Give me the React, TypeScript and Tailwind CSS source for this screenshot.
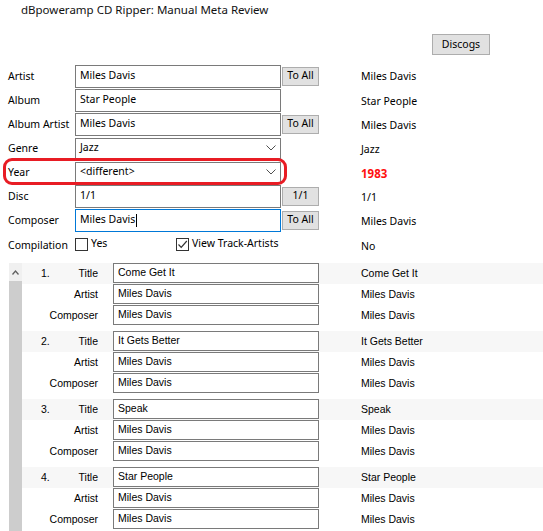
import React from "react";

const TOP = "font-['Noto_Sans',sans-serif] text-[10.5px]";
const TRK = "font-['Liberation_Sans',sans-serif] text-[10.5px]";

function Chevron() {
  return (
    <svg width="10" height="6" viewBox="0 0 10 6" className="mr-[4px]">
      <path d="M0.5 0.5 L5 5 L9.5 0.5" fill="none" stroke="#505050" strokeWidth="1" />
    </svg>
  );
}

function Btn({ label, w = "w-[37px]" }: { label: string; w?: string }) {
  return (
    <div className={"h-[19px] flex items-center justify-center bg-[#e1e1e1] border border-[#adadad] text-black " + w}>
      {label}
    </div>
  );
}

function Box({ checked }: { checked?: boolean }) {
  return (
    <div className="w-[13px] h-[13px] border border-[#333] bg-white flex items-center justify-center">
      {checked && (
        <svg width="11" height="11" viewBox="0 0 11 11">
          <path d="M1.5 5.5 L4.2 8.3 L9.8 2" fill="none" stroke="#333" strokeWidth="1.2" />
        </svg>
      )}
    </div>
  );
}

type TopRow = {
  label: string;
  value: string;
  kind: "input" | "select";
  btn?: string;
  right: string;
  red?: boolean;
  focus?: boolean;
};

const rows: TopRow[] = [
  { label: "Artist", value: "Miles Davis", kind: "input", btn: "To All", right: "Miles Davis" },
  { label: "Album", value: "Star People", kind: "input", right: "Star People" },
  { label: "Album Artist", value: "Miles Davis", kind: "input", btn: "To All", right: "Miles Davis" },
  { label: "Genre", value: "Jazz", kind: "select", right: "Jazz" },
  { label: "Year", value: "<different>", kind: "select", right: "1983", red: true },
  { label: "Disc", value: "1/1", kind: "input", btn: "1/1", right: "1/1" },
  { label: "Composer", value: "Miles Davis", kind: "input", btn: "To All", right: "Miles Davis", focus: true },
];

const tracks = [
  { n: "1.", title: "Come Get It" },
  { n: "2.", title: "It Gets Better" },
  { n: "3.", title: "Speak" },
  { n: "4.", title: "Star People" },
];

function TrackRow({ n, label, value, band }: { n?: string; label: string; value: string; band?: boolean }) {
  return (
    <div className={"h-[21px] flex items-start " + (band ? "bg-[#f7f7f7]" : "")}>
      <div className="w-[19px]" />
      <div className="w-[57px] h-[20px] flex items-center justify-between pt-px">
        <span>{n ?? ""}</span>
        <span>{label}</span>
      </div>
      <div className="w-[15px]" />
      <div className="w-[206px] h-[20px] border border-[#7a7a7a] bg-white flex items-center pl-[4px]">{value}</div>
      <div className="w-[42px]" />
      <div className="h-[20px] flex items-center pt-px">{value}</div>
    </div>
  );
}

export default function App() {
  return (
    <div className={"w-[543px] h-[531px] overflow-hidden bg-white relative text-black " + TOP}>
      <div className="pl-[21px] pt-[1px] h-[20px] text-[11.5px] text-[#111]">dBpoweramp CD Ripper: Manual Meta Review</div>

      <div className="h-[44px] flex justify-end pr-[53px] pt-[14px]">
        <div className="w-[58px] h-[21px] flex items-center justify-center bg-[#e1e1e1] border border-[#adadad]">Discogs</div>
      </div>

      <div className="flex flex-col">
        {rows.map((r, i) => (
          <div key={r.label} className="h-[24px] flex items-center pl-[8px]">
            <div className="w-[67px] pt-[2px]">{r.label}</div>
            {r.kind === "input" ? (
              <div
                className={
                  "w-[206px] h-[23px] bg-white flex items-center pl-[4px] border " +
                  (r.focus ? "border-[#0078d7]" : "border-[#7a7a7a]")
                }
              >
                {r.value}
                {r.focus && <span className="w-px h-[13px] bg-black ml-px" />}
              </div>
            ) : (
              <div className="w-[206px] h-[21px] bg-white flex items-center justify-between pl-[4px] border border-[#7a7a7a]">
                {r.value}
                <Chevron />
              </div>
            )}
            <div className="w-[38px] pl-[1px]">{r.btn && <Btn label={r.btn} />}</div>
            <div className="w-[42px]" />
            <div className={(i === 0 ? "pt-[2px] " : "pt-[4px] ") + (r.red ? "text-[#ff1010] font-bold text-[11.5px]" : "")}>
              {r.right}
            </div>
          </div>
        ))}
        <div className="h-[24px] flex items-center pl-[8px]">
          <div className="w-[67px] pt-[3px]">Compilation</div>
          <div className="w-[101px] flex items-center gap-[3px]">
            <Box />
            <span>Yes</span>
          </div>
          <div className="w-[140px] flex items-center gap-[3px]">
            <Box checked />
            <span>View Track-Artists</span>
          </div>
          <div className="w-[45px]" />
          <div className="pt-[6px]">No</div>
        </div>
      </div>

      <div className={"mt-[7px] flex " + TRK}>
        <div className="ml-[9px] w-[13px] flex flex-col">
          <div className="h-[18px] bg-[#f0f0f0] flex items-center justify-center">
            <svg width="7" height="5" viewBox="0 0 7 5">
              <path d="M0.5 4.5 L3.5 1 L6.5 4.5" fill="none" stroke="#606060" strokeWidth="1.3" />
            </svg>
          </div>
          <div className="flex-1 bg-[#cdcdcd] h-[260px]" />
        </div>
        <div className="flex-1 flex flex-col">
          {tracks.map((t) => (
            <div key={t.n} className="mb-[5px]">
              <TrackRow n={t.n} label="Title" value={t.title} band />
              <TrackRow label="Artist" value="Miles Davis" />
              <TrackRow label="Composer" value="Miles Davis" />
            </div>
          ))}
        </div>
      </div>

      <div className="absolute left-[3px] top-[158px] w-[284px] h-[27px] border-[3px] border-[#e81c24] rounded-[9px]" />
    </div>
  );
}
